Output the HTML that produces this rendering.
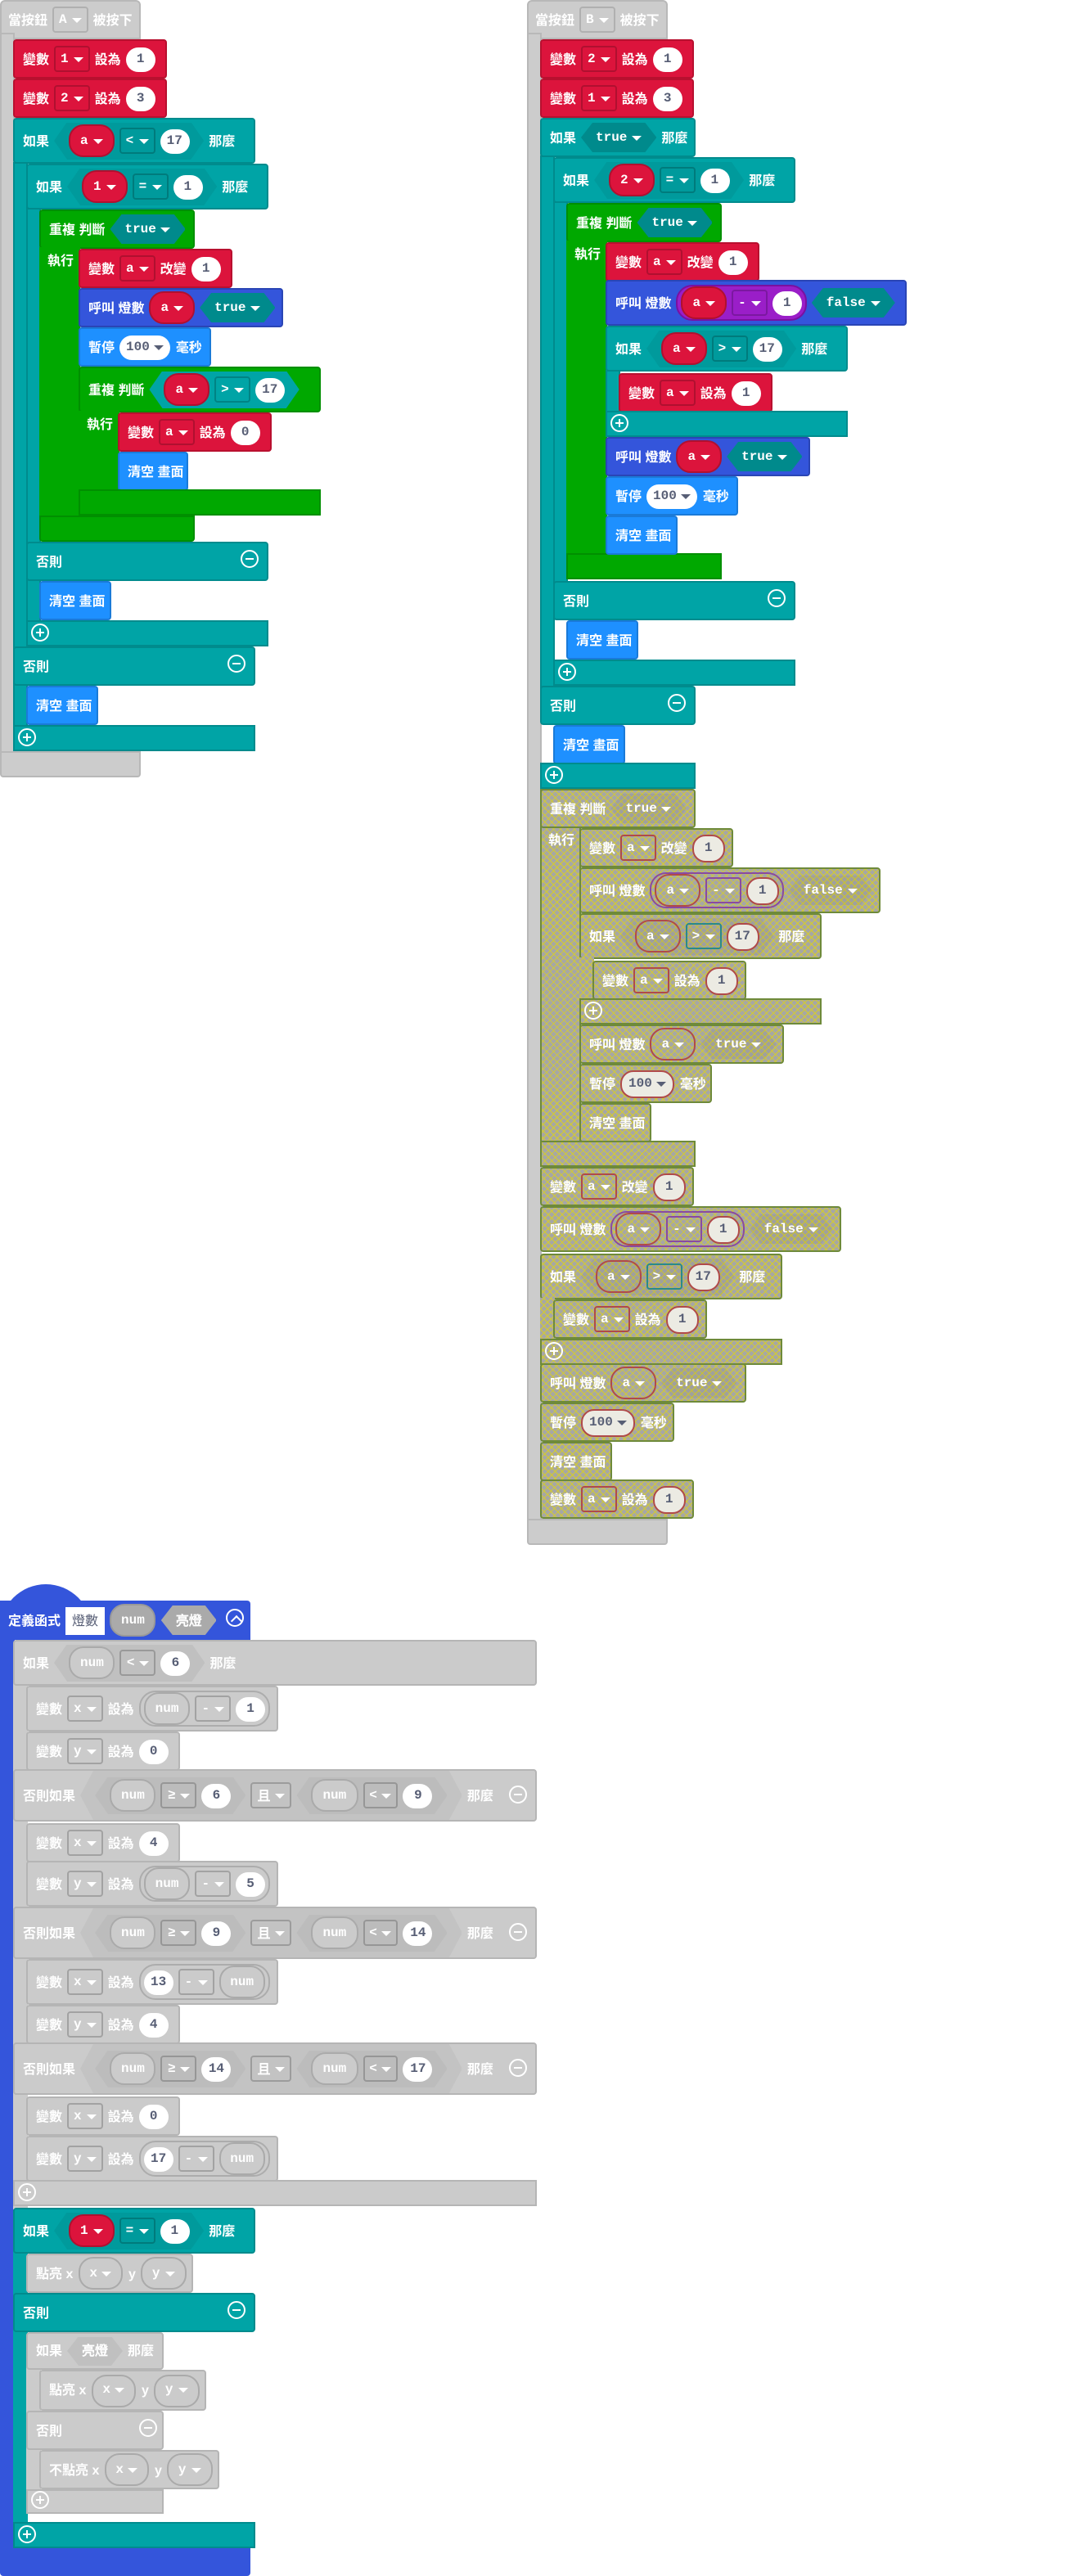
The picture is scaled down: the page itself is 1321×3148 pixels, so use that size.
<!DOCTYPE html>
<html><head><meta charset="utf-8">
<style>
html,body{margin:0;padding:0;background:#fff;}
body{width:1321px;height:3147px;overflow:hidden;position:relative;}
#w{position:absolute;left:0;top:0;width:661px;height:1574px;transform:scale(2);transform-origin:0 0;font-family:"Liberation Sans","Noto Sans CJK TC",sans-serif;font-size:8px;font-weight:bold;color:#fff;}
.b{position:absolute;box-sizing:border-box;display:flex;align-items:center;padding-left:5px;gap:3px;border-radius:2px;white-space:nowrap;}
.s{position:absolute;box-sizing:border-box;}
.red{background:#dc143c;border:0.5px solid #b8102f;}
.teal{background:#00a4a6;border:0.5px solid #008b8d;}
.grn{background:#00a800;border:0.5px solid #008f00;}
.blu{background:#3455db;border:0.5px solid #2a45b5;}
.lb{background:#1e90ff;border:0.5px solid #1a7ad8;}
.gry{background:#cbcbcb;border:0.5px solid #b5b5b5;}
.hat{background:#cccccc;border:0.5px solid #b8b8b8;}
.dis{background:repeating-linear-gradient(45deg,rgba(214,206,40,.75) 0 0.6px,transparent 0.6px 3px),repeating-linear-gradient(-45deg,rgba(214,206,40,.75) 0 0.6px,transparent 0.6px 3px),#a6a6a6;border:0.6px solid #6e8a3a;}
.dd{display:inline-flex;align-items:center;height:14px;padding:0 3px;border:0.6px solid rgba(0,0,0,.2);border-radius:2px;gap:3px;font-family:"Liberation Mono",monospace;font-size:8px;}
.t{display:inline-block;width:0;height:0;border-left:3px solid transparent;border-right:3px solid transparent;border-top:3px solid #fff;}
.td{border-top-color:#575e75;}
.n{display:inline-flex;align-items:center;justify-content:center;background:#fff;color:#575e75;border-radius:8px;height:15px;min-width:10px;padding:0 4px;font-family:"Liberation Mono",monospace;font-size:8px;}
.dis .n{background:#ecebe3;border:0.6px solid #b04a4a;}
.v{display:inline-flex;align-items:center;gap:3px;background:#dc143c;border:0.6px solid #b0102f;border-radius:9px;height:18px;padding:0 6px;font-family:"Liberation Mono",monospace;font-size:8px;}
.dis .v{background:transparent;border-color:#b04a4a;}
.hx{display:inline-flex;align-items:center;gap:3px;height:18px;padding:0 9px;background:#008a8c;clip-path:polygon(7px 0,calc(100% - 7px) 0,100% 50%,calc(100% - 7px) 100%,7px 100%,0 50%);font-family:"Liberation Mono",monospace;font-size:8px;}
.cmp{display:inline-flex;align-items:center;gap:3px;height:23px;padding:0 9px;background:rgba(0,0,0,.06);clip-path:polygon(8px 0,calc(100% - 8px) 0,100% 50%,calc(100% - 8px) 100%,8px 100%,0 50%);}
.ar{display:inline-flex;align-items:center;gap:3px;height:20px;padding:0 2px;border:0.6px solid rgba(0,0,0,.15);border-radius:10px;}
.dis .hx,.dis .cmp{background:rgba(0,0,0,.04);}
.gv{display:inline-flex;align-items:center;gap:3px;height:18px;padding:0 6px;border:0.6px solid #aaa;border-radius:9px;background:#cbcbcb;font-family:"Liberation Mono",monospace;font-size:8px;}
.ic{position:absolute;width:9px;height:9px;border:1.2px solid #fff;border-radius:50%;box-sizing:content-box;}
.ic::before{content:"";position:absolute;left:2px;top:3.8px;width:5px;height:1.4px;background:#fff;}
.ic.p::after{content:"";position:absolute;left:3.8px;top:2px;width:1.4px;height:5px;background:#fff;}
</style></head><body><div id="w">

<!-- ===== LEFT STACK ===== -->
<div class="s hat" style="left:0;top:0;width:86px;height:24px;border-radius:3px 3px 0 0"></div>
<div class="s hat" style="left:0;top:20px;width:9px;height:450px"></div>
<div class="s hat" style="left:0;top:459px;width:86px;height:16px;border-radius:0 0 2px 2px"></div>
<div class="b" style="left:0;top:0;height:24px;color:#fff">當按鈕 <span class="dd" style="border-color:#b0b0b0">A<i class="t"></i></span> 被按下</div>

<div class="b red" style="left:8px;top:24px;width:94px;height:24px">變數 <span class="dd">1<i class="t"></i></span> 設為 <span class="n">1</span></div>
<div class="b red" style="left:8px;top:48px;width:94px;height:24px">變數 <span class="dd">2<i class="t"></i></span> 設為 <span class="n">3</span></div>

<div class="b teal" style="left:8px;top:72px;width:148px;height:28px">如果 <span class="cmp"><span class="v">a<i class="t"></i></span><span class="dd">&lt;<i class="t"></i></span><span class="n">17</span></span> 那麼</div>
<div class="s teal" style="left:8px;top:99px;width:9px;height:360px"></div>
<div class="b teal" style="left:16px;top:100px;width:148px;height:28px">如果 <span class="cmp"><span class="v">1<i class="t"></i></span><span class="dd">=<i class="t"></i></span><span class="n">1</span></span> 那麼</div>
<div class="s teal" style="left:16px;top:127px;width:9px;height:268px"></div>

<div class="b grn" style="left:24px;top:128px;width:95px;height:24px">重複 判斷 <span class="hx">true<i class="t"></i></span></div>
<div class="s grn" style="left:24px;top:151px;width:25px;height:170px;border:none"></div>
<div class="b" style="left:24px;top:152px;height:14px">執行</div>
<div class="s grn" style="left:24px;top:315px;width:95px;height:16px;border-radius:0 0 2px 2px"></div>

<div class="b red" style="left:48px;top:152px;width:94px;height:24px">變數 <span class="dd">a<i class="t"></i></span> 改變 <span class="n">1</span></div>
<div class="b blu" style="left:48px;top:176px;width:125px;height:24px">呼叫 燈數 <span class="v">a<i class="t"></i></span><span class="hx">true<i class="t"></i></span></div>
<div class="b lb" style="left:48px;top:200px;width:81px;height:24px">暫停 <span class="n">100 <i class="t td" style="margin-left:3px"></i></span> 毫秒</div>
<div class="b grn" style="left:48px;top:224px;width:148px;height:28px">重複 判斷 <span class="cmp" style="background:#00a4a6"><span class="v">a<i class="t"></i></span><span class="dd">&gt;<i class="t"></i></span><span class="n">17</span></span></div>
<div class="s grn" style="left:48px;top:251px;width:25px;height:50px;border:none"></div>
<div class="b" style="left:48px;top:252px;height:14px">執行</div>
<div class="b red" style="left:72px;top:252px;width:94px;height:24px">變數 <span class="dd">a<i class="t"></i></span> 設為 <span class="n">0</span></div>
<div class="b lb" style="left:72px;top:276px;width:43px;height:24px">清空 畫面</div>
<div class="s grn" style="left:48px;top:299px;width:148px;height:16px"></div>

<div class="b teal" style="left:16px;top:331px;width:148px;height:24px">否則</div><div class="ic" style="left:147px;top:336px"></div>
<div class="b lb" style="left:24px;top:355px;width:44px;height:24px">清空 畫面</div>
<div class="s teal" style="left:16px;top:379px;width:148px;height:16px"></div><div class="ic p" style="left:19px;top:381px"></div>
<div class="b teal" style="left:8px;top:395px;width:148px;height:24px">否則</div><div class="ic" style="left:139px;top:400px"></div>
<div class="b lb" style="left:16px;top:419px;width:44px;height:24px">清空 畫面</div>
<div class="s teal" style="left:8px;top:443px;width:148px;height:16px"></div><div class="ic p" style="left:11px;top:445px"></div>

<!-- ===== RIGHT STACK ===== -->
<div class="s hat" style="left:322px;top:0;width:86px;height:24px;border-radius:3px 3px 0 0"></div>
<div class="s hat" style="left:322px;top:20px;width:9px;height:915px"></div>
<div class="s hat" style="left:322px;top:928px;width:86px;height:16px;border-radius:0 0 2px 2px"></div>
<div class="b" style="left:322px;top:0;height:24px">當按鈕 <span class="dd" style="border-color:#b0b0b0">B<i class="t"></i></span> 被按下</div>

<div class="b red" style="left:330px;top:24px;width:94px;height:24px">變數 <span class="dd">2<i class="t"></i></span> 設為 <span class="n">1</span></div>
<div class="b red" style="left:330px;top:48px;width:94px;height:24px">變數 <span class="dd">1<i class="t"></i></span> 設為 <span class="n">3</span></div>
<div class="b teal" style="left:330px;top:72px;width:95px;height:24px">如果 <span class="hx">true<i class="t"></i></span> 那麼</div>
<div class="s teal" style="left:330px;top:95px;width:9px;height:330px"></div>
<div class="b teal" style="left:338px;top:96px;width:148px;height:28px">如果 <span class="cmp"><span class="v">2<i class="t"></i></span><span class="dd">=<i class="t"></i></span><span class="n">1</span></span> 那麼</div>
<div class="s teal" style="left:338px;top:123px;width:9px;height:235px"></div>
<div class="b grn" style="left:346px;top:124px;width:95px;height:24px">重複 判斷 <span class="hx">true<i class="t"></i></span></div>
<div class="s grn" style="left:346px;top:147px;width:25px;height:195px;border:none"></div>
<div class="b" style="left:346px;top:148px;height:14px">執行</div>
<div class="s grn" style="left:346px;top:338px;width:95px;height:16px"></div>
<div class="b red" style="left:370px;top:148px;width:94px;height:24px">變數 <span class="dd">a<i class="t"></i></span> 改變 <span class="n">1</span></div>
<div class="b blu" style="left:370px;top:171px;width:184px;height:28px">呼叫 燈數 <span class="ar" style="background:#9a1ec8;border-color:#7a10a0"><span class="v">a<i class="t"></i></span><span class="dd">-<i class="t"></i></span><span class="n">1</span></span><span class="hx">false<i class="t"></i></span></div>
<div class="b teal" style="left:370px;top:199px;width:148px;height:28px">如果 <span class="cmp"><span class="v">a<i class="t"></i></span><span class="dd">&gt;<i class="t"></i></span><span class="n">17</span></span> 那麼</div>
<div class="s teal" style="left:370px;top:226px;width:9px;height:30px"></div>
<div class="b red" style="left:378px;top:228px;width:94px;height:24px">變數 <span class="dd">a<i class="t"></i></span> 設為 <span class="n">1</span></div>
<div class="s teal" style="left:370px;top:251px;width:148px;height:16px"></div><div class="ic p" style="left:373px;top:253px"></div>
<div class="b blu" style="left:370px;top:267px;width:125px;height:24px">呼叫 燈數 <span class="v">a<i class="t"></i></span><span class="hx">true<i class="t"></i></span></div>
<div class="b lb" style="left:370px;top:291px;width:81px;height:24px">暫停 <span class="n">100 <i class="t td" style="margin-left:3px"></i></span> 毫秒</div>
<div class="b lb" style="left:370px;top:315px;width:44px;height:24px">清空 畫面</div>
<div class="b teal" style="left:338px;top:355px;width:148px;height:24px">否則</div><div class="ic" style="left:469px;top:360px"></div>
<div class="b lb" style="left:346px;top:379px;width:44px;height:24px">清空 畫面</div>
<div class="s teal" style="left:338px;top:403px;width:148px;height:16px"></div><div class="ic p" style="left:341px;top:405px"></div>
<div class="b teal" style="left:330px;top:419px;width:95px;height:24px">否則</div><div class="ic" style="left:408px;top:424px"></div>
<div class="b lb" style="left:338px;top:443px;width:44px;height:24px">清空 畫面</div>
<div class="s teal" style="left:330px;top:466px;width:95px;height:16px"></div><div class="ic p" style="left:333px;top:468px"></div>

<!-- disabled blocks -->
<div class="s dis" style="left:330px;top:482px;width:25px;height:231px"></div>
<div class="b dis" style="left:330px;top:482px;width:95px;height:24px">重複 判斷 <span class="hx">true<i class="t"></i></span></div>
<div class="b" style="left:330px;top:506px;height:14px">執行</div>
<div class="s dis" style="left:330px;top:697px;width:95px;height:16px"></div>
<div class="b dis" style="left:354px;top:506px;width:94px;height:24px">變數 <span class="dd" style="border-color:#b04a4a">a<i class="t"></i></span> 改變 <span class="n">1</span></div>
<div class="b dis" style="left:354px;top:530px;width:184px;height:28px">呼叫 燈數 <span class="ar" style="border-color:#8a4aa0"><span class="v">a<i class="t"></i></span><span class="dd" style="border-color:#8a4aa0">-<i class="t"></i></span><span class="n">1</span></span><span class="hx">false<i class="t"></i></span></div>
<div class="b dis" style="left:354px;top:558px;width:148px;height:28px">如果 <span class="cmp"><span class="v">a<i class="t"></i></span><span class="dd" style="border-color:#2a8a8a">&gt;<i class="t"></i></span><span class="n">17</span></span> 那麼</div>
<div class="s dis" style="left:354px;top:585px;width:9px;height:28px;border:none"></div>
<div class="b dis" style="left:362px;top:587px;width:94px;height:24px">變數 <span class="dd" style="border-color:#b04a4a">a<i class="t"></i></span> 設為 <span class="n">1</span></div>
<div class="s dis" style="left:354px;top:610px;width:148px;height:16px"></div><div class="ic p" style="left:357px;top:612px"></div>
<div class="b dis" style="left:354px;top:626px;width:125px;height:24px">呼叫 燈數 <span class="v">a<i class="t"></i></span><span class="hx">true<i class="t"></i></span></div>
<div class="b dis" style="left:354px;top:650px;width:81px;height:24px">暫停 <span class="n">100 <i class="t td" style="margin-left:3px"></i></span> 毫秒</div>
<div class="b dis" style="left:354px;top:674px;width:44px;height:24px">清空 畫面</div>
<div class="b dis" style="left:330px;top:713px;width:94px;height:24px">變數 <span class="dd" style="border-color:#b04a4a">a<i class="t"></i></span> 改變 <span class="n">1</span></div>
<div class="b dis" style="left:330px;top:737px;width:184px;height:28px">呼叫 燈數 <span class="ar" style="border-color:#8a4aa0"><span class="v">a<i class="t"></i></span><span class="dd" style="border-color:#8a4aa0">-<i class="t"></i></span><span class="n">1</span></span><span class="hx">false<i class="t"></i></span></div>
<div class="b dis" style="left:330px;top:766px;width:148px;height:28px">如果 <span class="cmp"><span class="v">a<i class="t"></i></span><span class="dd" style="border-color:#2a8a8a">&gt;<i class="t"></i></span><span class="n">17</span></span> 那麼</div>
<div class="s dis" style="left:330px;top:793px;width:9px;height:28px;border:none"></div>
<div class="b dis" style="left:338px;top:794px;width:94px;height:24px">變數 <span class="dd" style="border-color:#b04a4a">a<i class="t"></i></span> 設為 <span class="n">1</span></div>
<div class="s dis" style="left:330px;top:818px;width:148px;height:16px"></div><div class="ic p" style="left:333px;top:820px"></div>
<div class="b dis" style="left:330px;top:833px;width:126px;height:24px">呼叫 燈數 <span class="v">a<i class="t"></i></span><span class="hx">true<i class="t"></i></span></div>
<div class="b dis" style="left:330px;top:857px;width:82px;height:24px">暫停 <span class="n">100 <i class="t td" style="margin-left:3px"></i></span> 毫秒</div>
<div class="b dis" style="left:330px;top:881px;width:44px;height:24px">清空 畫面</div>
<div class="b dis" style="left:330px;top:904px;width:94px;height:24px">變數 <span class="dd" style="border-color:#b04a4a">a<i class="t"></i></span> 設為 <span class="n">1</span></div>

<!-- ===== FUNCTION ===== -->
<div class="s blu" style="left:0;top:968px;width:56px;height:30px;border-radius:28px 28px 0 0;border:none"></div>
<div class="b blu" style="left:0;top:978px;width:153px;height:24px;border:none;border-radius:0 2px 0 0">定義函式 <span style="background:#fff;color:#575e75;padding:3px 4px;font-weight:normal">燈數</span><span class="gv" style="background:#aaa;border-color:#999">num</span><span class="hx" style="background:#aaa">亮燈</span></div>
<div class="s" style="left:138px;top:983px;width:11px;height:11px;border:1.2px solid #fff;border-radius:50%"><div style="position:absolute;left:3px;top:4px;width:4px;height:4px;border-left:1.3px solid #fff;border-top:1.3px solid #fff;transform:rotate(45deg)"></div></div>
<div class="s blu" style="left:0;top:1000px;width:9px;height:560px;border:none"></div>
<div class="s blu" style="left:0;top:1557px;width:153px;height:17px;border:none;border-radius:0 0 2px 2px"></div>

<div class="s gry" style="left:8px;top:1028px;width:9px;height:322px;border:none"></div>
<div class="b gry" style="left:8px;top:1002px;width:320px;height:28px">如果 <span class="cmp" style="background:rgba(0,0,0,.05)"><span class="gv">num</span><span class="dd">&lt;<i class="t"></i></span><span class="n">6</span></span> 那麼</div>
<div class="b gry" style="left:16px;top:1030px;width:154px;height:28px">變數 <span class="dd">x<i class="t"></i></span> 設為 <span class="ar"><span class="gv">num</span><span class="dd">-<i class="t"></i></span><span class="n">1</span></span></div>
<div class="b gry" style="left:16px;top:1058px;width:94px;height:24px">變數 <span class="dd">y<i class="t"></i></span> 設為 <span class="n">0</span></div>
<div class="b gry" style="left:8px;top:1081px;width:320px;height:32px">否則如果 <span class="cmp" style="height:30px;background:rgba(0,0,0,.04)"><span class="cmp" style="background:rgba(0,0,0,.03)"><span class="gv">num</span><span class="dd">≥<i class="t"></i></span><span class="n">6</span></span><span class="dd">且<i class="t"></i></span><span class="cmp" style="background:rgba(0,0,0,.03)"><span class="gv">num</span><span class="dd">&lt;<i class="t"></i></span><span class="n">9</span></span></span> 那麼</div><div class="ic" style="left:311px;top:1091px"></div>
<div class="b gry" style="left:16px;top:1114px;width:94px;height:24px">變數 <span class="dd">x<i class="t"></i></span> 設為 <span class="n">4</span></div>
<div class="b gry" style="left:16px;top:1137px;width:154px;height:28px">變數 <span class="dd">y<i class="t"></i></span> 設為 <span class="ar"><span class="gv">num</span><span class="dd">-<i class="t"></i></span><span class="n">5</span></span></div>
<div class="b gry" style="left:8px;top:1165px;width:320px;height:32px">否則如果 <span class="cmp" style="height:30px;background:rgba(0,0,0,.04)"><span class="cmp" style="background:rgba(0,0,0,.03)"><span class="gv">num</span><span class="dd">≥<i class="t"></i></span><span class="n">9</span></span><span class="dd">且<i class="t"></i></span><span class="cmp" style="background:rgba(0,0,0,.03)"><span class="gv">num</span><span class="dd">&lt;<i class="t"></i></span><span class="n">14</span></span></span> 那麼</div><div class="ic" style="left:311px;top:1175px"></div>
<div class="b gry" style="left:16px;top:1197px;width:154px;height:28px">變數 <span class="dd">x<i class="t"></i></span> 設為 <span class="ar"><span class="n">13</span><span class="dd">-<i class="t"></i></span><span class="gv">num</span></span></div>
<div class="b gry" style="left:16px;top:1225px;width:94px;height:24px">變數 <span class="dd">y<i class="t"></i></span> 設為 <span class="n">4</span></div>
<div class="b gry" style="left:8px;top:1248px;width:320px;height:32px">否則如果 <span class="cmp" style="height:30px;background:rgba(0,0,0,.04)"><span class="cmp" style="background:rgba(0,0,0,.03)"><span class="gv">num</span><span class="dd">≥<i class="t"></i></span><span class="n">14</span></span><span class="dd">且<i class="t"></i></span><span class="cmp" style="background:rgba(0,0,0,.03)"><span class="gv">num</span><span class="dd">&lt;<i class="t"></i></span><span class="n">17</span></span></span> 那麼</div><div class="ic" style="left:311px;top:1258px"></div>
<div class="b gry" style="left:16px;top:1281px;width:94px;height:24px">變數 <span class="dd">x<i class="t"></i></span> 設為 <span class="n">0</span></div>
<div class="b gry" style="left:16px;top:1305px;width:154px;height:28px">變數 <span class="dd">y<i class="t"></i></span> 設為 <span class="ar"><span class="n">17</span><span class="dd">-<i class="t"></i></span><span class="gv">num</span></span></div>
<div class="s gry" style="left:8px;top:1332px;width:320px;height:16px"></div><div class="ic p" style="left:11px;top:1334px"></div>

<div class="s teal" style="left:8px;top:1375px;width:9px;height:170px;border:none"></div>
<div class="b teal" style="left:8px;top:1349px;width:148px;height:28px">如果 <span class="cmp"><span class="v">1<i class="t"></i></span><span class="dd">=<i class="t"></i></span><span class="n">1</span></span> 那麼</div>
<div class="b gry" style="left:16px;top:1377px;width:102px;height:24px">點亮 x <span class="gv">x<i class="t"></i></span> y <span class="gv">y<i class="t"></i></span></div>
<div class="b teal" style="left:8px;top:1401px;width:148px;height:24px">否則</div><div class="ic" style="left:139px;top:1406px"></div>
<div class="s gry" style="left:16px;top:1446px;width:9px;height:80px;border:none"></div>
<div class="b gry" style="left:16px;top:1425px;width:84px;height:23px">如果 <span class="hx" style="background:rgba(0,0,0,.05)">亮燈</span> 那麼</div>
<div class="b gry" style="left:24px;top:1448px;width:102px;height:25px">點亮 x <span class="gv">x<i class="t"></i></span> y <span class="gv">y<i class="t"></i></span></div>
<div class="b gry" style="left:16px;top:1473px;width:84px;height:24px">否則</div><div class="ic" style="left:85px;top:1478px"></div>
<div class="b gry" style="left:24px;top:1497px;width:110px;height:24px">不點亮 x <span class="gv">x<i class="t"></i></span> y <span class="gv">y<i class="t"></i></span></div>
<div class="s gry" style="left:16px;top:1521px;width:84px;height:15px"></div><div class="ic p" style="left:19px;top:1522px"></div>
<div class="s teal" style="left:8px;top:1541px;width:148px;height:16px"></div><div class="ic p" style="left:11px;top:1543px"></div>

</div></body></html>
